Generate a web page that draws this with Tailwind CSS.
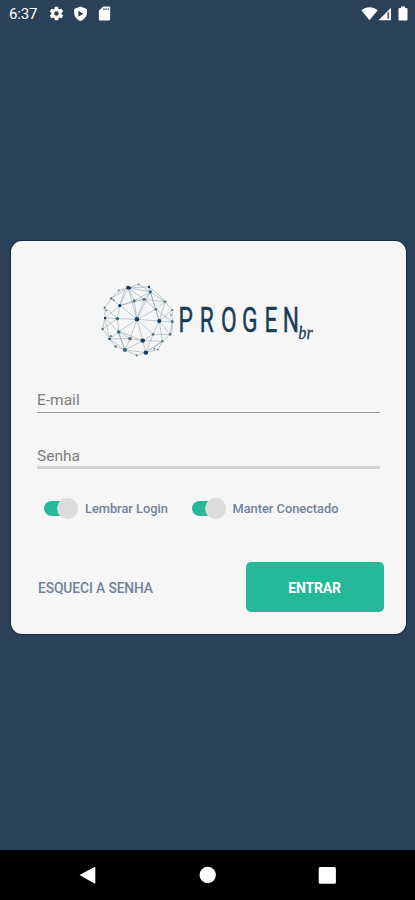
<!DOCTYPE html>
<html lang="pt-BR">
<head>
    <meta charset="UTF-8">
    <meta name="viewport" content="width=device-width, initial-scale=1.0">
    <title>Progen BR - Login</title>
    <script src="https://cdn.jsdelivr.net/npm/@tailwindcss/browser@4"></script>
</head>
<body class="h-screen flex flex-col overflow-hidden bg-[#2b4157] font-[Roboto,sans-serif]">

    <!-- Status Bar -->
    <header class="h-[27px] flex items-center pl-[9px] pr-[7px] text-white">
        <span class="w-[30px] text-[15px] leading-none tracking-[-0.2px] pt-px">6:37</span>
        <svg class="ml-[9px] size-[17px]" viewBox="0 0 24 24" fill="currentColor"><path d="M19.14 12.94c.04-.3.06-.61.06-.94 0-.32-.02-.64-.07-.94l2.03-1.58a.49.49 0 0 0 .12-.61l-1.92-3.32a.49.49 0 0 0-.59-.22l-2.39.96c-.5-.38-1.03-.7-1.62-.94l-.36-2.54a.48.48 0 0 0-.48-.41h-3.84a.47.47 0 0 0-.47.41l-.36 2.54c-.59.24-1.13.57-1.62.94l-2.39-.96a.48.48 0 0 0-.59.22L2.74 8.87a.47.47 0 0 0 .12.61l2.03 1.58c-.05.3-.09.63-.09.94s.02.64.07.94l-2.03 1.58a.49.49 0 0 0-.12.61l1.92 3.32c.12.22.37.29.59.22l2.39-.96c.5.38 1.03.7 1.62.94l.36 2.54c.05.24.24.41.48.41h3.84c.24 0 .44-.17.47-.41l.36-2.54c.59-.24 1.13-.56 1.62-.94l2.39.96c.22.08.47 0 .59-.22l1.92-3.32a.47.47 0 0 0-.12-.61zM12 15.2a3.2 3.2 0 1 1 0-6.4 3.2 3.2 0 0 1 0 6.4z"/></svg>
        <svg class="ml-[7px] size-[17px]" viewBox="0 0 24 24" fill="currentColor" fill-rule="evenodd"><path d="M12 2 3 5.500V11c0 5.500 3.800 9.900 9 11.500 5.200-1.600 9-6 9-11.500V5.500zM9 8l7 4.300L9 16.500z"/></svg>
        <svg class="ml-[7px] size-[17px]" viewBox="0 0 24 24" fill="currentColor"><path d="M18 2h-8L4 8v12a2 2 0 0 0 2 2h12a2 2 0 0 0 2-2V4a2 2 0 0 0-2-2zm-6 5h-1.500V4.500H12zm3 0h-1.500V4.500H15zm3 0h-1.500V4.500H18z"/></svg>
        <svg class="ml-auto h-[14px] w-[17px]" viewBox="0 0 17 14" fill="currentColor"><path d="M.3 3.300C5-.8 12-.8 16.700 3.300L8.500 13.300z"/></svg>
        <svg class="h-[14px] w-[14px]" viewBox="0 0 14 14"><path d="M.5 13.300 13 .8v12.500z" fill="#fff"/><path d="M9.300 6 11.200 4.200v7.600H9.300z" fill="#2b4157" fill-opacity=".8"/></svg>
        <svg class="ml-[6px] h-[15px] w-[10px]" viewBox="0 0 10 15" fill="currentColor"><path d="M3 .5h4V2h1.500q1 0 1 1v10.500q0 1-1 1h-7q-1 0-1-1V3q0-1 1-1H3z"/></svg>
    </header>

    <!-- Login Card -->
    <main class="flex-1 pt-[214px] pl-[11px] pr-[9.500px]">
        <form class="h-[392.500px] rounded-[11px] bg-[#f6f6f6] px-[26px] pt-[34px] shadow-[0_0_0_1px_#122741]">

            <!-- Logo -->
            <svg class="ml-[58px] h-[90px] w-[225px]" viewBox="0 0 675 270">
                <g transform="translate(-5 -3) scale(1.030)">
                    <g fill="none" stroke="#8799a3" stroke-width="2.200" stroke-opacity=".65">
                        <path d="M127 132 101 40M127 132 148 74M127 132 119 78M127 132 77 92M127 132 70 130M127 132 74 169M127 132 107 188M127 132 144 194M127 132 192 137M127 132 182 103M127 132 174 176M127 132 166 52"/>
                        <path d="M101 40 166 52 209 81 230 105 230 139 224 176 201 196 153 229 92 221 47 189 27 160 34 128 33 98 52 71z"/>
                        <path d="M101 40 77 92 70 130 74 169 107 188 144 194 174 176 192 137 182 103 148 74 119 78 77 92 34 128 74 169 47 189 107 188 92 221 144 194 153 229 174 176 224 176 192 137 230 139 182 103 209 81 148 74 166 52 119 78 101 40"/>
                        <path d="M77 92 52 71M77 92 92 45M70 130 34 128M74 169 92 221M101 40 148 74M166 52 192 137 230 105M166 52 182 103M192 137 209 81M192 137 201 196 153 229M144 194 201 196M144 194 70 165 92 221M77 92 148 74M27 160 70 130 33 98M132 30 166 52 162 38 101 40 132 30M92 221 126 237 153 229M47 189 65 211 92 221"/>
                        <path d="M52 71 74 48 101 40M162 38 188 58 209 81M230 139 230 160 224 176M201 196 188 220 153 229M34 128 47 189"/>
                    </g>
                    <g fill="#173b5a">
                        <circle cx="101" cy="40" r="5.500"/><circle cx="106" cy="41" r="4"/>
                        <circle cx="127" cy="132" r="6.500"/><circle cx="192" cy="137" r="6"/>
                        <circle cx="144" cy="194" r="6.500"/><circle cx="153" cy="229" r="6.500"/>
                        <circle cx="77" cy="92" r="4.500"/><circle cx="34" cy="128" r="3.500"/>
                        <circle cx="47" cy="189" r="3.500"/><circle cx="162" cy="38" r="3.500"/>
                    </g>
                    <g fill="#2c7084">
                        <circle cx="92" cy="221" r="6"/><circle cx="166" cy="52" r="5"/>
                        <circle cx="70" cy="130" r="5"/><circle cx="230" cy="139" r="4"/>
                        <circle cx="74" cy="169" r="5"/>
                    </g>
                    <g fill="#5d7781">
                        <circle cx="148" cy="74" r="5"/><circle cx="119" cy="78" r="4.500"/>
                        <circle cx="107" cy="188" r="5.500"/><circle cx="182" cy="103" r="4"/>
                        <circle cx="174" cy="176" r="4"/><circle cx="209" cy="81" r="4"/>
                        <circle cx="230" cy="105" r="3"/><circle cx="224" cy="176" r="4"/>
                        <circle cx="201" cy="196" r="3.500"/><circle cx="52" cy="71" r="3.500"/>
                        <circle cx="33" cy="98" r="3"/><circle cx="27" cy="160" r="3.500"/>
                        <circle cx="51" cy="181" r="3"/><circle cx="65" cy="211" r="3.500"/>
                        <circle cx="126" cy="237" r="3"/><circle cx="132" cy="30" r="2.500"/>
                        <circle cx="74" cy="48" r="2.500"/><circle cx="188" cy="220" r="2.500"/>
                        <circle cx="178" cy="218" r="2.500"/><circle cx="226" cy="119" r="2.500"/>
                        <circle cx="59" cy="76" r="2.500"/><circle cx="38" cy="106" r="2.500"/>
                    </g>
                </g>
                <text transform="scale(.65 1)" x="386 483 581 679 782 867" y="172" font-size="105" fill="#193c59" stroke="#193c59" stroke-width="1.500">PROGEN</text>
                <text transform="translate(610 191) scale(.9 1)" font-family="Liberation Serif, serif" font-style="italic" font-size="54" fill="#193c59" stroke="#193c59" stroke-width=".8">br</text>
            </svg>

            <!-- Fields -->
            <input type="text" placeholder="E-mail" class="mt-[20px] block h-[28px] w-[343px] border-b border-[#989898] pt-[3px] text-[15.500px] outline-none placeholder:text-[#7c7c7c]">
            <input type="password" placeholder="Senha" class="mt-[26px] block h-[30px] w-[343px] border-b-[3px] border-[#d2d2d2] pt-[6px] text-[15.500px] outline-none placeholder:text-[#7c7c7c]">

            <!-- Toggles -->
            <div class="mt-[28px] ml-[7px] flex h-[22px] items-center text-[12.800px] font-medium text-[#71829a]">
                <label class="flex w-[147.500px] items-center">
                    <span class="flex h-[15px] w-[34px] items-center justify-end rounded-full bg-linear-to-r from-[#26b999] from-60% to-transparent to-60%">
                        <span class="size-[21px] shrink-0 rounded-full bg-[#dcdcdc]"></span>
                    </span>
                    <span class="ml-[7px] pt-[2px] whitespace-nowrap">Lembrar Login</span>
                </label>
                <label class="flex items-center">
                    <span class="flex h-[15px] w-[34px] items-center justify-end rounded-full bg-linear-to-r from-[#26b999] from-60% to-transparent to-60%">
                        <span class="size-[21px] shrink-0 rounded-full bg-[#dcdcdc]"></span>
                    </span>
                    <span class="ml-[7px] pt-[2px] whitespace-nowrap">Manter Conectado</span>
                </label>
            </div>

            <!-- Actions -->
            <div class="mt-[43px] flex items-center justify-between pl-[1px]">
                <button type="button" class="pt-[2px] text-[13.800px] font-medium tracking-[-0.1px] text-[#71829a]">ESQUECI A SENHA</button>
                <button type="submit" class="-mr-[4px] h-[50px] w-[138px] shrink-0 rounded-[5px] bg-[#26b999] pt-[2px] text-[14px] font-bold tracking-[-0.2px] text-white">ENTRAR</button>
            </div>
        </form>
    </main>

    <!-- Navigation Bar -->
    <nav class="h-[50px] bg-black">
        <svg class="h-[50px] w-[415px]" viewBox="0 0 415 50" fill="#fff">
            <path d="M79.500 25 94.500 17q.8-.3.8.5v15.500q0 .8-.8.4z"/>
            <circle cx="207.700" cy="25" r="8.200"/>
            <rect x="318.700" y="17" width="17.200" height="16.800" rx="1.500"/>
        </svg>
    </nav>
</body>
</html>
